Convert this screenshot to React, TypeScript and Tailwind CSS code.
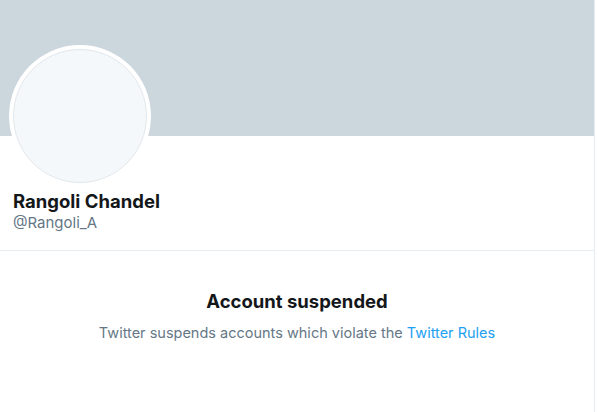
import React from 'react';

const App: React.FC = () => {
    return (
        <div className="min-h-[412px] bg-white font-['Inter','Liberation_Sans',sans-serif]">
            <div className="w-[595px] min-h-[412px] border-r border-[#e6ecf0]">
                {/* Banner */}
                <div className="h-[136px] bg-[#ccd6dd]" />

                {/* Profile header */}
                <div className="px-[13px] pb-[17px]">
                    <div className="-mt-[91px] -ml-[4px] w-[142px] h-[142px] rounded-full bg-white p-[4px]">
                        <div className="w-full h-full rounded-full bg-[#f5f8fa] border border-[#e1e8ed]" />
                    </div>
                    <h1 className="mt-[2px] text-[18.5px] leading-[24px] font-bold text-[#14171a]">
                        Rangoli Chandel
                    </h1>
                    <p className="text-[15px] leading-[20px] text-[#657786]">@Rangoli_A</p>
                </div>

                <div className="h-px bg-[#e6ecf0]" />

                {/* Suspended notice */}
                <div className="pt-[39px] text-center">
                    <h2 className="text-[18.5px] leading-[22px] font-bold text-[#14171a]">
                        Account suspended
                    </h2>
                    <p className="mt-[11px] text-[14.5px] leading-[20px] text-[#657786]">
                        Twitter suspends accounts which violate the{' '}
                        <a href="#" className="text-[#1da1f2]">Twitter Rules</a>
                    </p>
                </div>
            </div>
        </div>
    );
};

export default App;
